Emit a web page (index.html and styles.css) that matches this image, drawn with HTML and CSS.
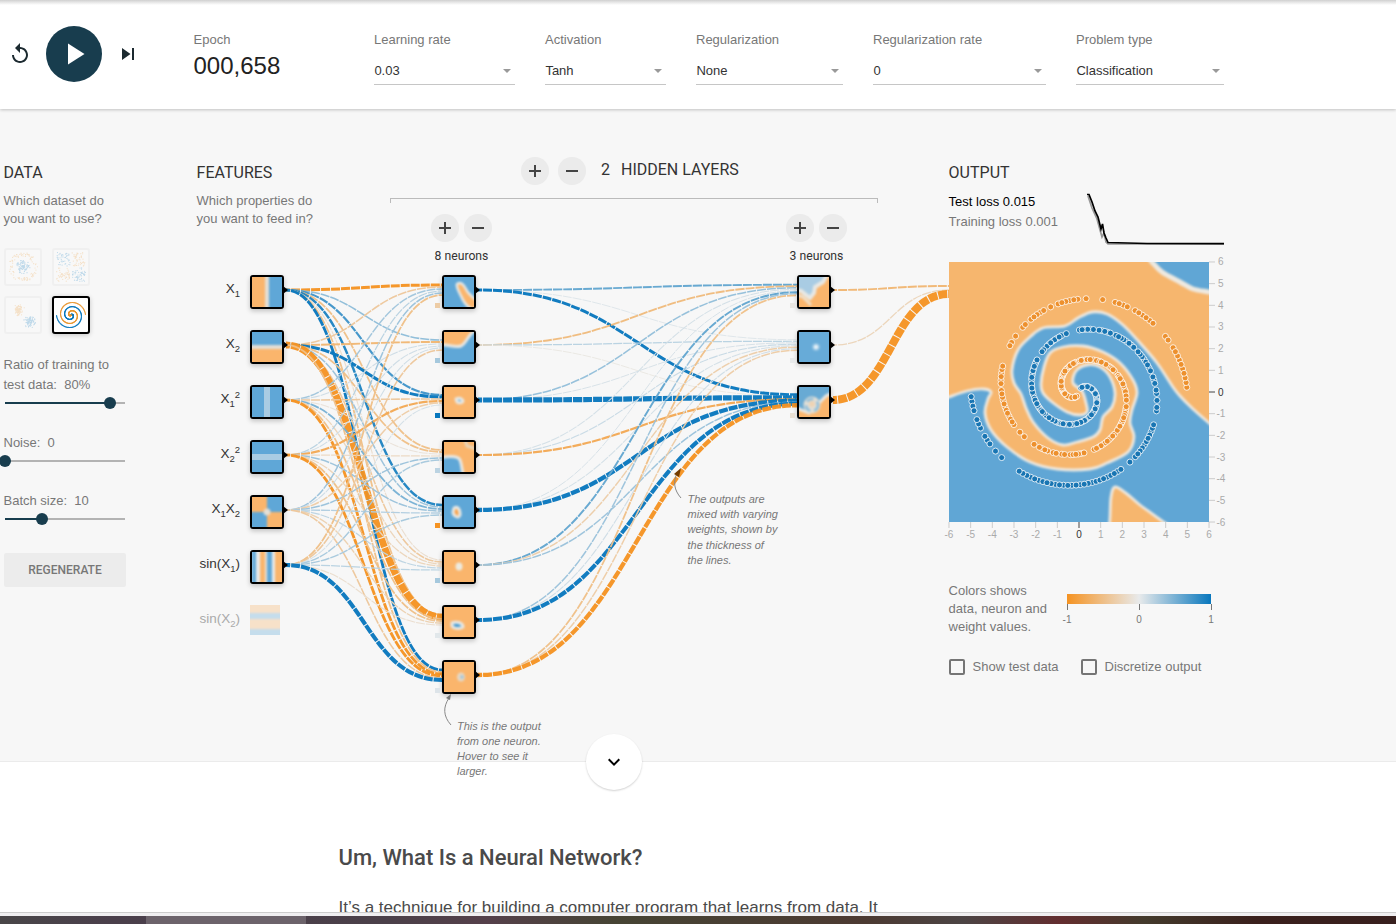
FILE: index.html
```html
<!DOCTYPE html>
<html lang="en">
<head>
<meta charset="utf-8">
<title>Neural Network Playground</title>
<link rel="stylesheet" href="styles.css">
</head>
<body>
<header class="controls">
  <div class="timeline">
    <svg class="icon-reset" viewBox="0 0 24 24" width="24" height="24"><path d="M12 5V1L7 6l5 5V7c3.310 0 6 2.690 6 6s-2.690 6-6 6-6-2.690-6-6H4c0 4.420 3.580 8 8 8s8-3.580 8-8-3.580-8-8-8z"/></svg>
    <button class="play" aria-label="Run"><svg viewBox="0 0 24 24" width="36" height="36"><path d="M8 5v14l11-7z"/></svg></button>
    <svg class="icon-step" viewBox="0 0 24 24" width="24" height="24"><path d="M6 18l8.5-6L6 6v12zM16 6v12h2V6h-2z"/></svg>
  </div>
  <div class="epoch"><span class="label">Epoch</span><span class="count">000,658</span></div>
  <div class="field rate"><span class="label">Learning rate</span><div class="select">0.03<i></i></div></div>
  <div class="field activation"><span class="label">Activation</span><div class="select">Tanh<i></i></div></div>
  <div class="field regular"><span class="label">Regularization</span><div class="select">None<i></i></div></div>
  <div class="field regular-rate"><span class="label">Regularization rate</span><div class="select">0<i></i></div></div>
  <div class="field problem"><span class="label">Problem type</span><div class="select">Classification<i></i></div></div>
</header>

<main class="playground">
  <section class="data">
    <h3>Data</h3>
    <p class="question">Which dataset do<br>you want to use?</p>
    <div class="thumbs">
      <svg class="thumb" data-kind="circle" viewBox="0 0 34 34"></svg>
      <svg class="thumb" data-kind="xor" viewBox="0 0 34 34"></svg>
      <svg class="thumb" data-kind="gauss" viewBox="0 0 34 34"></svg>
      <svg class="thumb selected" data-kind="spiral" viewBox="0 0 34 34"></svg>
    </div>
    <p class="slider-label two">Ratio of training to<br>test data:&nbsp; 80%</p>
    <div class="slider s80"><b></b><i></i></div>
    <p class="slider-label">Noise:&nbsp; 0</p>
    <div class="slider s0"><b></b><i></i></div>
    <p class="slider-label">Batch size:&nbsp; 10</p>
    <div class="slider s30"><b></b><i></i></div>
    <button class="regenerate">Regenerate</button>
  </section>

  <section class="network">
    <div class="network-head">
      <div class="features">
        <h3>Features</h3>
        <p class="question">Which properties do<br>you want to feed in?</p>
      </div>
      <div class="hidden-layers">
        <div class="layers-row"><span class="round plus"></span><span class="round"></span><span class="num">2</span><span class="name">Hidden layers</span></div>
        <div class="bracket"></div>
        <div class="neuron-controls">
          <div class="neurons"><div><span class="round plus"></span><span class="round"></span></div><p>8 neurons</p></div>
          <div class="neurons"><div><span class="round plus"></span><span class="round"></span></div><p>3 neurons</p></div>
        </div>
      </div>
    </div>
    <div class="canvas" id="canvas">
      <svg class="links" id="links" width="753" height="496"></svg>
      <svg class="pointer" width="753" height="496">
        <path d="M255 460C247 451 247 442 253 433"/><path class="tip" d="M255 429l-5 4 4 2z"/>
        <path d="M485 233C478 225 477 217 481 208"/><path class="tip dark" d="M485 203l-7 6 5 3z"/>
      </svg>
      <p class="callout weights">The outputs are<br>mixed with varying<br>weights, shown by<br>the thickness of<br>the lines.</p>
      <p class="callout neuron">This is the output<br>from one neuron.<br>Hover to see it<br>larger.</p>
    </div>
  </section>

  <section class="output">
    <div class="output-head">
      <div>
        <h3>Output</h3>
        <p class="loss test">Test loss 0.015</p>
        <p class="loss">Training loss 0.001</p>
      </div>
      <svg class="chart" width="137" height="54" viewBox="0 0 137 54">
        <path class="train" d="M1 4L5 16 10 27 13 38 15 45 17 41 19 50 21 52H137"/>
        <path d="M0 2.500H2L5 10 8 19 11 25 14 37 15.500 32 17 41 19 46 21 50.500 60 51.500 137 51.700"/>
      </svg>
    </div>
    <svg class="heatmap" id="heatmap" width="276" height="285" viewBox="0 0 276 285"></svg>
    <div class="legend">
      <p>Colors shows<br>data, neuron and<br>weight values.</p>
      <div class="scale"><div class="bar"></div><div class="ticks"><span>-1</span><span>0</span><span>1</span></div></div>
    </div>
    <div class="checks"><label><i></i>Show test data</label><label><i></i>Discretize output</label></div>
  </section>
  <div class="more"><svg viewBox="0 0 24 24" width="24" height="24"><path d="M7.400 8.600L12 13.200l4.600-4.600L18 10l-6 6-6-6z"/></svg></div>
</main>

<article class="about">
  <h1>Um, What Is a Neural Network?</h1>
  <p>It’s a technique for building a computer program that learns from data. It</p>
</article>
<div class="edge"></div>
<footer class="taskbar"></footer>
<script src="app.js"></script>
</body>
</html>
```
FILE: styles.css
```css
* { box-sizing: border-box; }
body {
  margin: 0; width: 1396px; height: 924px; overflow: hidden;
  display: flex; flex-direction: column; background: #fff;
  font: 13px/18px "Liberation Sans", Arial, sans-serif; color: #777;
}
p, h1, h3 { margin: 0; font-weight: 400; }
button { border: 0; padding: 0; }

.controls {
  flex: none; height: 109px; display: flex; align-items: flex-start; padding-top: 26px;
  position: relative; z-index: 2;
  background: linear-gradient(#cfcfcf, #e4e4e4 2px, #fff 5px);
  box-shadow: 0 1px 3px rgba(0,0,0,.22);
}
.timeline { display: flex; align-items: center; width: 193.500px; padding-left: 7.500px; }
.timeline svg { fill: #1c2a30; }
.play { width: 56px; height: 56px; margin: 0 13.500px 0 14.500px; border-radius: 50%; background: #183d4e; display: grid; place-items: center; }
.timeline .play svg { fill: #fff; }
.epoch { display: flex; flex-direction: column; width: 180.500px; padding-top: 5px; }
.epoch .count { font-size: 24px; line-height: 34px; color: #222; }
.label { display: block; line-height: 18px; }
.field { padding-top: 5px; margin-right: 30px; }
.select {
  display: flex; justify-content: space-between; align-items: center; height: 36px; padding: 8px 4px 0 .4px;
  border-bottom: 1px solid #c6c6c6; color: #333;
}
.select i { border: 4.500px solid transparent; border-top-color: #999; border-bottom: 0; }
.rate { width: 141px; } .activation { width: 121px; } .regular { width: 147px; }
.regular-rate { width: 173px; } .problem { width: 148px; margin-right: 0; }

.playground { flex: none; height: 653px; display: flex; padding: 0 0 0 4px; background: #f7f7f7; position: relative; border-bottom: 1px solid #ebebeb; }
h3 { font: 16px/24px Roboto, sans-serif; color: #333; text-transform: uppercase; }
.question { margin-top: 7px; }

.data { width: 122px; margin-right: 70px; padding-top: 52px; }
.data h3, .data p { margin-left: -.5px; }
.thumbs { display: grid; grid-template-columns: 38px 38px; gap: 10px; margin-top: 20px; }
.thumb { width: 38px; height: 38px; border: 2px solid #f0f0f0; border-radius: 3px; background: #f8f8f8; }
.thumb g { opacity: .24; }
.thumb.selected { border-color: #000; background: #fff; box-shadow: 0 1px 5px rgba(0,0,0,.2); }
.thumb.selected g { opacity: 1; }
.slider-label { line-height: 20px; }
.slider-label.two { margin-top: 21px; }
.slider { display: flex; align-items: center; height: 12px; margin: 2px 0 0 1px; width: 120px; background: linear-gradient(#b3b3b3, #b3b3b3) 0 5px / 100% 2px no-repeat; }
.slider b { height: 2px; background: #183d4e; }
.slider i { width: 12px; height: 12px; border-radius: 50%; background: #183d4e; margin-left: -6px; }
.s80 b { width: 105px; } .s0 b { width: 0; } .s30 b { width: 37px; }
.slider + .slider-label { margin-top: 24px; }
.regenerate { width: 122px; height: 34px; margin-top: 28px; background: #ececec; border-radius: 2px; font: 500 12px Roboto, sans-serif; color: #777; text-transform: uppercase; }

.network { width: 753px; }
.network-head { display: flex; height: 156px; }
.features { width: 194px; padding: 52px 0 0 .6px; }
.hidden-layers { width: 488px; padding-top: 48px; }
.layers-row { display: flex; align-items: center; height: 28px; padding-left: 131px; font: 16px Roboto, sans-serif; color: #333; text-transform: uppercase; }
.layers-row .num { margin: -3px 11px 0 6px; }
.layers-row .name { margin-top: -3px; }
.round { display: inline-block; width: 28px; height: 28px; border-radius: 50%; margin-right: 9px; background: linear-gradient(#444, #444) center / 12px 2px no-repeat, #ebebeb; }
.round.plus { background: linear-gradient(#444, #444) center / 12px 2px no-repeat, linear-gradient(#444, #444) center / 2px 12px no-repeat, #ebebeb; }
.bracket { height: 5px; margin-top: 13px; border: 1px solid #bbb; border-bottom: 0; }
.neuron-controls { display: flex; gap: 293px; padding: 12px 0 0 41px; }
.neurons { width: 62px; flex: none; }
.neurons > div { display: flex; gap: 5px; height: 26px; }
.neurons .round { width: 28px; height: 28px; flex: none; margin: -1px 0 0; }
.neurons p { font: 12.200px/16px Roboto, sans-serif; color: #333; margin: 7px 0 0 -1px; text-align: center; white-space: nowrap; }

.canvas { position: relative; height: 496px; }
.links, .pointer { position: absolute; left: 0; top: 0; fill: none; }
.links path { stroke-dasharray: 9 1; stroke-dashoffset: -5; opacity: .96; }
.pointer { z-index: 3; stroke: #888; }
.pointer .tip { fill: #777; stroke: none; }
.pointer .dark { fill: #733b00; }
.node { position: absolute; width: 34px; height: 34px; border: 2px solid #000; border-radius: 3px; box-shadow: 0 2px 5px rgba(0,0,0,.22); }
.node svg { display: block; width: 30px; height: 30px; }
.node::after { content: ""; position: absolute; left: 31px; top: 9px; border: 4px solid transparent; border-left: 5px solid #000; border-right: 0; }
.node.off { border: 0; width: 30px; height: 30px; opacity: .32; box-shadow: none; }
.node.off::after { display: none; }
.bias { position: absolute; width: 5px; height: 5px; }
.feature-name { position: absolute; left: 0; width: 44px; text-align: right; font-size: 13.500px; line-height: 20px; color: #333; white-space: nowrap; }
.feature-name sub, .feature-name sup { font-size: 9.500px; line-height: 0; }
.feature-name.off { color: #aaa; }
.callout { position: absolute; z-index: 3; font-size: 11px; line-height: 15px; font-style: italic; color: #777; white-space: nowrap; }
.callout.weights { left: 491.500px; top: 227px; line-height: 15.200px; }
.callout.neuron { left: 261px; top: 454px; }

.output { width: 276px; padding-top: 52px; }
.output h3, .loss, .legend p { position: relative; left: -.4px; }
.output-head { display: flex; justify-content: space-between; height: 101px; padding-right: 1px; }
.loss { line-height: 20px; white-space: nowrap; }
.loss.test { color: #000; margin-top: 7px; }
.chart { margin-top: 31px; fill: none; stroke: #000; stroke-width: 1.700; }
.chart .train { stroke: #999; }
.heatmap { display: block; overflow: visible; }
.heatmap text { font-size: 10px; fill: #aaa; }
.heatmap .zero { fill: #333; }
.legend { display: flex; margin-top: 35px; }
.legend p { width: 118px; white-space: nowrap; }
.scale { width: 144px; padding-top: 12px; }
.bar { height: 10px; background: linear-gradient(90deg, #f59322, #e8eaeb 50%, #0877bd); }
.ticks { display: flex; justify-content: space-between; margin: 0 -10px; font-size: 10px; line-height: 12px; }
.ticks span { width: 20px; text-align: center; padding-top: 10px; background: linear-gradient(#777, #777) 50% 0 / 1px 6px no-repeat; }
.checks { display: flex; gap: 23px; margin-top: 22px; }
.checks label { display: flex; align-items: center; gap: 7.500px; white-space: nowrap; }
.checks label + label { margin-left: -.5px; }
.checks i { width: 16px; height: 16px; border: 2px solid #757575; border-radius: 2px; }
.more { position: absolute; z-index: 4; left: 586px; top: 625px; width: 56px; height: 56px; border-radius: 50%; background: #fff; display: grid; place-items: center; box-shadow: 0 1px 2px rgba(0,0,0,.18); }

.about { flex: 1; min-height: 0; overflow: hidden; padding: 81px 0 0 338.500px; color: #4a4a4a; white-space: nowrap; }
.about h1 { font: 500 22px/30px Roboto, sans-serif; }
.about p { font: 17px/24px "Liberation Sans", Arial, sans-serif; margin-top: 23px; }
.edge { flex: none; height: 4px; background: #f0eff1; border-top: 1px solid #ccc; }
.taskbar { flex: none; height: 8px; background: linear-gradient(#6c636b, #6c636b) 146px 0 / 160px 8px no-repeat, linear-gradient(90deg, #494648, #4a3f4b 8%, #4b4049 28%, #55404a 35%, #464434 44%, #4c3a32 62%, #4c4444 69%, #632d2f 76%, #433a2c 82%, #3a201c 90%, #38201e); }
```
FILE: app.js
```js
const ORANGE = [245, 147, 34], GREY = [232, 234, 235], BLUE = [8, 119, 189];
const TILE_O = '#fab56c', TILE_B = '#5fa7d7';

function mix(w) {
  const t = Math.min(1, Math.abs(w)), end = w < 0 ? ORANGE : BLUE;
  return 'rgb(' + GREY.map((g, i) => Math.round(g + (end[i] - g) * t)).join(',') + ')';
}
let seed = 4217;
function rand() {
  seed = (seed + 0x6D2B79F5) | 0;
  let t = Math.imul(seed ^ (seed >>> 15), 1 | seed);
  t = (t + Math.imul(t ^ (t >>> 7), 61 | t)) ^ t;
  return ((t ^ (t >>> 14)) >>> 0) / 4294967296;
}

// Links between columns of the network
const row = i => 25 + 55 * i;
const hiddenWeights = [
  [-1.2, .4, .75, -.5, .9, -.15, -.5, 1.1],
  [-.4, -.6, 1.2, -.5, .35, -.4, -3.3, -.5],
  [.32, .12, -.4, -.1, .5, -.25, -.5, -1.1],
  [.22, .12, -.75, -.2, .35, -.25, -.5, -1.1],
  [.35, .12, -.35, .35, .25, .2, -.3, -.4],
  [-.5, -.4, .1, .3, .3, .22, -.15, 1.8]
];
const outWeights = [
  [.6, .05, 1.2], [-.55, .22, -.05], [.38, .08, 2.4], [.1, .15, -.75],
  [.08, .1, 1.9], [.6, -.33, .35], [.35, .12, 1.8], [-.5, -.35, -1.9]
];
const finalWeights = [[-.6], [-.25], [-4]];
function columnLinks(weights, x0, x1) {
  const n = weights.length, mid = (x0 + x1) / 2;
  let out = '';
  weights.forEach((ws, i) => ws.forEach((w, j) => {
    const y0 = row(i), y1 = row(j) + (i - (n - 1) / 2) / n * 12;
    out += `<path d="M${x0} ${y0}C${mid} ${y0} ${mid} ${y1} ${x1} ${y1}" stroke="${mix(w)}" stroke-width="${.85 + 1.8 * Math.abs(w)}"/>`;
  }));
  return out;
}
document.getElementById('links').innerHTML =
  columnLinks(hiddenWeights, 90, 246) + columnLinks(outWeights, 282, 601) + columnLinks(finalWeights, 637, 753);

// Node tiles
const rect = (x, y, w, h, c) => `<rect x="${x}" y="${y}" width="${w}" height="${h}" fill="${c}"/>`;
const soft = (s, b = 1) => `<g style="filter:blur(${b}px)">${s}</g>`;
const fillO = rect(-5, -5, 40, 40, TILE_O), fillB = rect(-5, -5, 40, 40, TILE_B);
const W = '#e8e8e4';
const blob = (d, c, sw = 3) => `<path d="${d}" fill="${c}" stroke="${W}" stroke-width="${sw}" stroke-linejoin="round"/>`;
const features = [
  soft(fillB + rect(-5, -5, 18, 40, TILE_O) + rect(13, -5, 4, 40, '#e4dfd5')),
  soft(fillB + rect(-5, 16, 40, 20, TILE_O) + rect(-5, 13, 40, 4, '#e4dfd5')),
  soft(fillB + rect(12, -5, 6, 40, '#a9cce3'), .7),
  soft(fillB + rect(-5, 12, 40, 6, '#a9cce3'), .7),
  soft(fillB + rect(-5, -5, 20, 20, TILE_O) + rect(15, 15, 20, 20, TILE_O) + '<circle cx="15" cy="15" r="3.5" fill="#e4dfd5"/>', .8),
  soft(fillB + rect(-5, -5, 6, 40, '#8fbfe0') + rect(4, -5, 4, 40, '#e8eaeb') + rect(8, -5, 5, 40, TILE_O) + rect(13, -5, 2, 40, '#e8e0d5') + rect(20, -5, 3, 40, '#e8eaeb') + rect(23, -5, 12, 40, TILE_O), .8),
  soft(fillO + rect(-5, 8, 40, 6, TILE_B) + rect(-5, 24, 40, 10, TILE_B), 1.2)
];
const hidden = [
  soft(fillB + blob('M13 7C17 4 20 8 22 12C24 17 29 20 33 24L31 34C24 31 19 24 17 19C14 13 12 10 13 7Z', TILE_O, 2.5)),
  soft(fillB + blob('M-5 -5H34L27 2C22 8 21 12 17 14C10 16 4 12-5 13Z', TILE_O)),
  soft(fillO + blob('M12 12Q17 10 19 14Q18 17 13 15Z', '#3f97cf', 3), 1.1),
  soft(fillO + blob('M-5 16C5 14 14 14 16 18C18 23 18 30 20 36H-5Z', TILE_B) + '<path d="M21-2L23 4L33 7" stroke="#e8d5b8" stroke-width="3" fill="none"/>'),
  soft(fillB + blob('M10 11C14 9 16 12 16 18C15 22 9 19 9 15Z', '#f9a24a', 3), 1.1),
  soft(fillO + '<ellipse cx="15" cy="14.500" rx="3.500" ry="4" fill="#edebe0"/>', 1.2),
  soft(fillO + blob('M8 16C13 14 19 16 19 20C16 22 10 22 8 19Z', '#3f97cf', 3), 1.3),
  soft(fillO + '<ellipse cx="17" cy="15" rx="4" ry="4.500" fill="#e7d8c4"/><circle cx="18" cy="15" r="2" fill="#a9c8d8"/>', 1)
];
const last = [
  soft(fillO + '<path d="M-5 -5H30L24 5L16 10L15 16L11 21L2 14L-5 13Z" fill="#a9cce3" stroke="#e8e8e4" stroke-width="4"/><path d="M-2 18L4 20L12 28" stroke="#f0dfc8" stroke-width="3" fill="none"/>', 1.3),
  soft(rect(-5, -5, 40, 40, '#67abd8') + '<circle cx="17" cy="15" r="2.800" fill="#f4f8fa"/>', 1.4),
  soft(fillO + '<path d="M-5-5H35V5L27 9L21 15L10 26L-5 20Z" fill="#68aad4" stroke="#e8e8e4" stroke-width="3"/><circle cx="13" cy="18" r="8.500" fill="#e2dfd6"/><circle cx="13" cy="18" r="6" fill="none" stroke="#8fbedb" stroke-width="2.500" stroke-dasharray="7 4"/><circle cx="13" cy="17" r="3" fill="#eed3b3"/>', .9)
];
const canvas = document.getElementById('canvas');
function addTiles(tiles, x) {
  tiles.forEach((art, i) => {
    const off = x === 54 && i === 6;
    canvas.insertAdjacentHTML('beforeend', `<div class="node${off ? ' off' : ''}" style="left:${x}px;top:${10 + 55 * i}px"><svg viewBox="0 0 30 30">${art}</svg></div>`);
  });
}
addTiles(features, 54); addTiles(hidden, 246); addTiles(last, 601);
const addBias = (list, x) => list.forEach((b, i) =>
  canvas.insertAdjacentHTML('beforeend', `<span class="bias" style="left:${x}px;top:${38 + 55 * i}px;background:${mix(b)}"></span>`));
addBias([-.35, .3, 1, .2, -1, .3, .03, .05], 239);
addBias([-.05, 0, -.12], 594);
['X<sub>1</sub>', 'X<sub>2</sub>', 'X<sub>1</sub><sup>2</sup>', 'X<sub>2</sub><sup>2</sup>', 'X<sub>1</sub>X<sub>2</sub>', 'sin(X<sub>1</sub>)', 'sin(X<sub>2</sub>)'].forEach((t, i) =>
  canvas.insertAdjacentHTML('beforeend', `<span class="feature-name${i === 6 ? ' off' : ''}" style="top:${14 + 55 * i}px">${t}</span>`));

// Dataset thumbnails
function spiral(n, shift) {
  return Array.from({ length: n }, (_, i) => {
    const r = i / n * 5, t = 3.5 * Math.PI * i / n + shift;
    return [r * Math.sin(t), r * Math.cos(t)];
  });
}
const gauss = () => rand() + rand() + rand() - 1.5;
const kinds = {
  circle: () => [0, 1].map(k => Array.from({ length: 90 }, () => {
    const r = k ? 3.6 + rand() * 1.4 : rand() * 2.4, a = rand() * 6.283;
    return [r * Math.cos(a), r * Math.sin(a)];
  })),
  xor: () => [1, -1].map(s => Array.from({ length: 100 }, () => {
    const x = (.3 + rand() * 4.7) * (rand() < .5 ? 1 : -1);
    return [x, -s * Math.sign(x) * (.3 + rand() * 4.7)];
  })),
  gauss: () => [[2.4, -2.4], [-1.4, 1.7]].map((c, k) => Array.from({ length: 90 }, () => [c[0] + gauss() * (k ? 1.3 : 1.8), c[1] + gauss() * (k ? 1.5 : 1.8)])),
  spiral: () => [spiral(220, 0), spiral(220, Math.PI)]
};
document.querySelectorAll('.thumb').forEach(svg => {
  const sets = kinds[svg.dataset.kind]();
  svg.innerHTML = '<g>' + sets.map((pts, k) => pts.map(p =>
    `<circle cx="${17 + p[0] * 2.9}" cy="${17 - p[1] * 2.9}" r=".6" fill="${k ? '#e8962f' : '#0877bd'}"/>`).join('')).join('') + '</g>';
});

// Output heatmap
function smooth(p) {
  let d = `M${p[0]}`;
  for (let i = 0; i < p.length - 1; i++) {
    const a = p[Math.max(0, i - 1)], b = p[i], c = p[i + 1], e = p[Math.min(p.length - 1, i + 2)];
    d += `C${b[0] + (c[0] - a[0]) / 6} ${b[1] + (c[1] - a[1]) / 6} ${c[0] - (e[0] - b[0]) / 6} ${c[1] - (e[1] - b[1]) / 6} ${c[0]} ${c[1]}`;
  }
  return d;
}
const body = [[268,168],[260,161],[244,147],[231,134],[224,125],[208,101],[191,81],[174,63],[158,52],[143,50],[129,56],[116,64],[94,66],[81,75],[69,88],[63,108],[65,121],[72,132],[77,146],[84,160],[99,176],[114,183],[128,180],[144,175],[151,168],[154,155],[163,145],[166,131],[161,115],[151,105],[138,103],[127,109],[124,121],[133,129],[137,141],[138,150],[130,153],[118,150],[103,140],[94,131],[92,122],[95,105],[101,91],[114,85],[134,84],[154,90],[171,101],[184,118],[188,131],[183,148],[181,161],[185,175],[179,190],[158,201],[141,207],[108,207],[81,200],[58,185],[42,168],[36,151],[39,137],[42,130],[34,127],[18,129],[0,135],[-10,139]];
const corner = [[195,-10],[203,0],[213,10],[231,20],[244,27],[260,30],[272,32]];
const wedge = [[160,270],[161,255],[162,235],[166,225],[178,232],[191,243],[216,261],[228,270]];
const edge = 'stroke="#eee9e0" stroke-width="2.8"';
let map = `<clipPath id="area"><rect width="260" height="260"/></clipPath><g clip-path="url(#area)"><g style="filter:blur(1.3px)">
  <rect x="-20" y="-20" width="300" height="300" fill="#f6b66e"/>
  <path d="${smooth(body)}V285H285Z" fill="#60a6d5" ${edge}/>
  <path d="${smooth(corner)}V-20Z" fill="#60a6d5" stroke="#eee9e0" stroke-width="5"/>
  <path d="${smooth(wedge)}Z" fill="#f6b66e" ${edge}/></g></g>`;
const gaps = [[148,37],[209,66],[70,69],[55,99],[79,180],[140,189],[123,70],[26,153],[44,185],[61,202],[176,203]];
let dots = [];
[0, 1].forEach(k => spiral(250, k * Math.PI).forEach((p, i) => {
  const x = 130 + p[0] * 21.67, y = 130 - p[1] * 21.67;
  if (i < 10 || (rand() < .16 && i < 247) || gaps.some(g => Math.hypot(g[0] - x, g[1] - y) < 3.6)) return;
  dots.push([rand(), `<circle cx="${x.toFixed(1)}" cy="${y.toFixed(1)}" r="3" fill="${k ? '#ed902d' : '#1875b3'}" stroke="#fff" stroke-opacity=".8"/>`]);
}));
map += dots.sort((a, b) => a[0] - b[0]).map(d => d[1]).join('');
for (let v = -6; v <= 6; v++) {
  const p = 130 + v * 21.67, q = 130 - v * 21.67, z = v === 0;
  map += `<path d="M${p} 260v6M260 ${q}h6" stroke="${z ? '#444' : '#ccc'}"/>
  <text x="${p}" y="276" text-anchor="middle"${z ? ' class="zero"' : ''}>${v}</text>
  <text x="${v < 0 ? 267.500 : 269}" y="${q + 3.5}"${z ? ' class="zero"' : ''}>${v}</text>`;
}
document.getElementById('heatmap').innerHTML = map;
```
